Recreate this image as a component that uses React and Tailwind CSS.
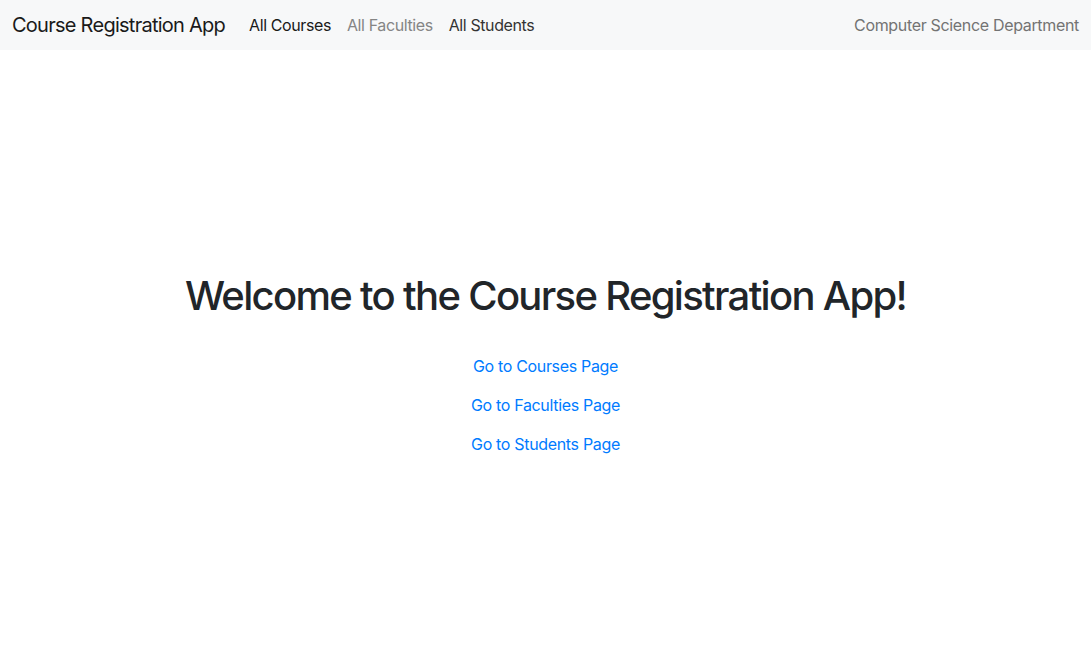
import React from 'react';

const navLinks = [
  { label: 'All Courses', className: 'text-[#1a1a1a]' },
  { label: 'All Faculties', className: 'text-[#858585]' },
  { label: 'All Students', className: 'text-[#333333]' },
];

const pageLinks = ['Go to Courses Page', 'Go to Faculties Page', 'Go to Students Page'];

export default function App() {
  return (
    <div
      className="min-h-[667px] bg-white text-[#212529]"
      style={{ fontFamily: 'Inter, "Noto Sans", sans-serif' }}
    >
      {/* Navbar */}
      <nav className="flex h-[50px] items-center bg-[#f7f8f9] px-3">
        <span className="mr-4 text-[20px] leading-[30px] tracking-[-0.74px] text-[#1a1a1a]">
          Course Registration App
        </span>
        <div className="flex items-center">
          {navLinks.map((link) => (
            <a
              key={link.label}
              href="#"
              className={`px-2 text-[16px] leading-6 tracking-[-0.4px] ${link.className}`}
            >
              {link.label}
            </a>
          ))}
        </div>
        <span className="ml-auto text-[16px] leading-6 tracking-[-0.33px] text-[#737373]">
          Computer Science Department
        </span>
      </nav>

      {/* Welcome */}
      <main className="flex flex-col items-center pt-[222px]">
        <h1 className="text-[40px] font-medium leading-[48px] tracking-[-1.68px] text-[#212529]">
          Welcome to the Course Registration App!
        </h1>
        <div className="mt-[34px] flex flex-col items-center gap-[15px]">
          {pageLinks.map((label) => (
            <a key={label} href="#" className="text-[16px] leading-6 tracking-[-0.33px] text-[#007bff]">
              {label}
            </a>
          ))}
        </div>
      </main>
    </div>
  );
}
